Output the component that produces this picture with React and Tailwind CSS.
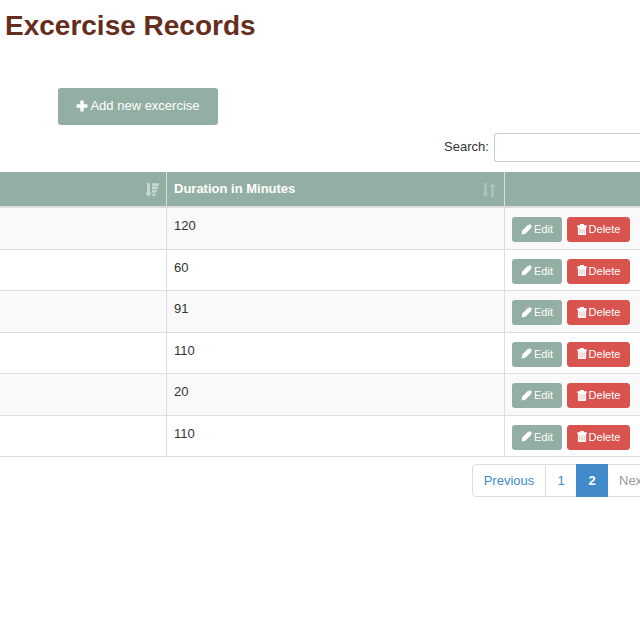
import React from "react";

const durations = [120, 60, 91, 110, 20, 110];

function PlusIcon() {
  return (
    <svg viewBox="0 0 12 12" className="size-3 fill-current" aria-hidden="true">
      <path d="M4.900 .5h2.200a.6.6 0 0 1 .6.6v3.200h3.200a.6.6 0 0 1 .6.6v2.200a.6.6 0 0 1-.6.6H7.700v3.200a.6.6 0 0 1-.6.6H4.900a.6.6 0 0 1-.6-.6V7.700H1.100a.6.6 0 0 1-.6-.6V4.900a.6.6 0 0 1 .6-.6h3.200V1.100A.6.6 0 0 1 4.900 .5z" />
    </svg>
  );
}

function PencilIcon() {
  return (
    <svg viewBox="0 0 12 12" className="size-[11px] fill-current" aria-hidden="true">
      <path d="M.6 11.400l.8-4.200 6-6a.5.5 0 0 1 .7 0l2.700 2.700a.5.5 0 0 1 0 .7l-6 6z" />
      <path d="M8.300 1l.4-.4a1.200 1.200 0 0 1 1.700 0l1 1a1.200 1.200 0 0 1 0 1.700l-.4.4z" />
    </svg>
  );
}

function TrashIcon() {
  return (
    <svg viewBox="0 0 10 11" className="h-[11px] w-2.5 fill-current" aria-hidden="true">
      <path d="M3 1.200V.6A.6.6 0 0 1 3.600 0h2.800a.6.6 0 0 1 .6.6v.6h2.200a.6.6 0 0 1 .6.6v1.200H.2V1.800a.6.6 0 0 1 .6-.6z" />
      <path d="M.9 3h8.200v7a1 1 0 0 1-1 1H1.900a1 1 0 0 1-1-1z" />
      <path
        d="M2.900 4.400v5.200M5 4.400v5.200M7.100 4.400v5.200"
        className="fill-none stroke-[#d9534f] opacity-60"
        strokeWidth="0.7"
      />
    </svg>
  );
}

function SortedIcon() {
  return (
    <svg viewBox="0 0 14 14" className="size-3.5 fill-white opacity-50" aria-hidden="true">
      <path d="M2.100 0h2.800v9.800h2L3.500 14 .1 9.800h2z" />
      <path d="M7 .2h7v2.600H7zM7 3.600h5.800v2.600H7zM7 7h4.600v2.600H7zM7.400 10.400h2.800V13H7.400z" />
    </svg>
  );
}

function SortIcon() {
  return (
    <svg viewBox="0 0 14 14" className="size-3.5 fill-white opacity-25" aria-hidden="true">
      <path d="M2.200 0h2.600v9.800h2L3.500 14 .2 9.800h2z" />
      <path d="M9.200 14h2.600V4.200h2L10.500 0 7.200 4.200h2z" />
    </svg>
  );
}

export default function App() {
  return (
    <main className="min-h-screen overflow-hidden bg-white font-['Liberation_Sans',Arial,sans-serif] text-[13px] leading-[18px] text-[#333333]">
      <h1 className="px-[5px] pt-2 text-[28px] leading-9 font-bold text-[#662d1e]">Excercise Records</h1>

      <div className="pt-11 pl-[58px]">
        <button
          type="button"
          className="flex h-[37px] w-40 items-center justify-center gap-0.5 rounded-[3px] bg-[#93afa3] pb-0.5 text-white"
        >
          <PlusIcon />
          Add new excercise
        </button>
      </div>

      <div className="flex items-center pt-2 pb-2.5 pl-[444px]">
        <label htmlFor="search" className="mr-[5px] shrink-0 pb-0.5">Search:</label>
        <input
          id="search"
          type="search"
          className="h-[29px] min-w-0 flex-1 rounded-l-[3px] border border-r-0 border-[#cccccc] bg-white px-2 outline-none"
        />
      </div>

      <table className="w-full table-fixed border-separate border-spacing-0">
        <colgroup>
          <col className="w-[167px]" />
          <col className="w-[338px]" />
          <col />
        </colgroup>
        <thead>
          <tr className="h-9 bg-[#93afa3] text-left text-white">
            <th className="border-r border-b-2 border-[#dddddd] pr-[7px]">
              <div className="flex justify-end pt-0.5">
                <SortedIcon />
              </div>
            </th>
            <th className="border-r border-b-2 border-[#dddddd] pr-2 pl-[7px]">
              <div className="flex items-center justify-between">
                <span>Duration in Minutes</span>
                <span className="pt-0.5"><SortIcon /></span>
              </div>
            </th>
            <th className="border-b-2 border-[#dddddd]" aria-label="Actions" />
          </tr>
        </thead>
        <tbody>
          {durations.map((minutes, index) => (
            <tr key={index} className="odd:h-[42px] odd:bg-[#f9f9f9] even:h-[41px]">
              <td className="border-r border-b border-[#dddddd]" />
              <td className="border-r border-b border-[#dddddd] px-[7px] pt-[9px] align-top">{minutes}</td>
              <td className="border-b border-[#dddddd] pt-0.5 pl-[7px]">
                <div className="flex gap-[5px] text-[11px] leading-4 text-white">
                  <button
                    type="button"
                    className="flex h-[25px] w-[50px] items-center justify-center gap-0.5 rounded-[3px] bg-[#93afa3] pb-px"
                  >
                    <PencilIcon />
                    Edit
                  </button>
                  <button
                    type="button"
                    className="flex h-[25px] w-[63px] items-center justify-center gap-0.5 rounded-[3px] border border-[#d9534f] bg-[#d9534f] pb-px"
                  >
                    <TrashIcon />
                    Delete
                  </button>
                </div>
              </td>
            </tr>
          ))}
        </tbody>
      </table>

      <nav aria-label="Pagination" className="flex pt-[7px] pl-[472px] text-[#428bca]">
        <a
          href="#previous"
          className="flex h-[33px] w-[74px] shrink-0 items-center justify-center rounded-l-[4px] border border-[#dddddd]"
        >
          Previous
        </a>
        <a
          href="#page-1"
          className="flex h-[33px] w-[30px] shrink-0 items-center justify-center border-y border-[#dddddd]"
        >
          1
        </a>
        <a
          href="#page-2"
          aria-current="page"
          className="flex h-[33px] w-8 shrink-0 items-center justify-center bg-[#428bca] font-bold text-white"
        >
          2
        </a>
        <a
          href="#next"
          className="flex h-[33px] shrink-0 items-center rounded-r-[4px] border border-l-0 border-[#dddddd] px-[11px] text-[#999999]"
        >
          Next
        </a>
      </nav>
    </main>
  );
}
